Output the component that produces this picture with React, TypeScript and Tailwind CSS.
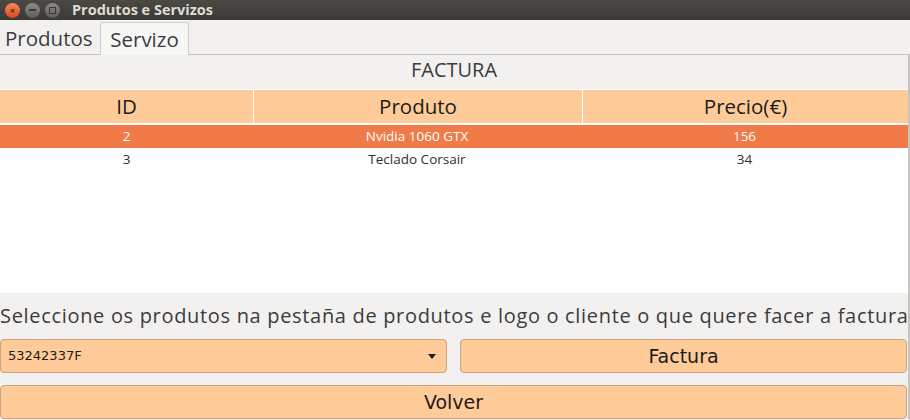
const rows = [
  { id: 2, name: "Nvidia 1060 GTX", price: 156, selected: true },
  { id: 3, name: "Teclado Corsair", price: 34, selected: false },
];

const ui = { fontFamily: '"Open Sans", "Noto Sans", sans-serif' };
const dejavu = { fontFamily: '"DejaVu Sans", sans-serif' };

function TitleBar() {
  return (
    <div className="flex h-[20px] items-center bg-gradient-to-b from-[#4a4944] to-[#3a3935]">
      <div className="flex items-center gap-[5px] pl-[5px]">
        <span className="flex h-[15px] w-[15px] items-center justify-center rounded-full bg-gradient-to-b from-[#f58a5c] to-[#d9471c] text-[9px] font-bold leading-none text-[#5a1d07]">
          ×
        </span>
        <span className="flex h-[15px] w-[15px] items-center justify-center rounded-full bg-gradient-to-b from-[#8c8b86] to-[#5e5d58]">
          <span className="h-[2px] w-[7px] bg-[#3a3935]" />
        </span>
        <span className="flex h-[15px] w-[15px] items-center justify-center rounded-full bg-gradient-to-b from-[#8c8b86] to-[#5e5d58]">
          <span className="h-[7px] w-[7px] border border-[#3a3935]" />
        </span>
      </div>
      <span className="ml-[12px] text-[14.5px] font-bold text-[#dfdbd2]" style={ui}>
        Produtos e Servizos
      </span>
    </div>
  );
}

function Tabs() {
  return (
    <div className="flex h-[35px] items-end border-b border-[#c6c4c1] bg-[#f2f1f0] pl-[1px]">
      <div className="flex h-[32px] w-[99px] items-center px-[4px] text-[20.5px] text-[#3c3c3c]" style={ui}>
        Produtos
      </div>
      <div
        className="-mb-px flex h-[33px] w-[89px] items-center justify-center rounded-t-[3px] border border-b-0 border-[#cfcdca] bg-[#f7f7f6] text-[20.5px] text-[#3c3c3c]"
        style={ui}
      >
        Servizo
      </div>
    </div>
  );
}

function Table() {
  return (
    <div className="flex h-[204px] flex-col bg-white pt-[1px]">
      <div className="grid h-[35px] grid-cols-[253px_328px_1fr] gap-px border-b-2 border-white bg-white text-[20.5px] text-[#1c1c1c]" style={ui}>
        <div className="flex items-center justify-center bg-[#ffcb98]">ID</div>
        <div className="flex items-center justify-center bg-[#ffcb98]">Produto</div>
        <div className="flex items-center justify-center bg-[#ffcb98]">Precio(€)</div>
      </div>
      {rows.map((r) => (
        <div
          key={r.id}
          className={`grid h-[23px] grid-cols-[253px_328px_1fr] text-[13.5px] ${r.selected ? "bg-[#f07a48] text-white" : "bg-white text-[#2e2e2e]"}`}
          style={ui}
        >
          <div className="flex items-center justify-center">{r.id}</div>
          <div className="flex items-center justify-center">{r.name}</div>
          <div className="flex items-center justify-center">{r.price}</div>
        </div>
      ))}
    </div>
  );
}

export default function App() {
  return (
    <div className="h-[420px] w-[910px] overflow-hidden bg-[#f2f1f0]">
      <TitleBar />
      <Tabs />
      <div className="flex flex-col border-r-2 border-[#c6c4c1]">
        <div className="flex h-[34px] items-center justify-center pb-[4px] text-[20px] text-[#3c3c3c]" style={ui}>
          FACTURA
        </div>
        <Table />
        <div className="flex h-[46px] items-center whitespace-nowrap text-[20px] tracking-[0.68px] text-[#3c3c3c]" style={ui}>
          Seleccione os produtos na pestaña de produtos e logo o cliente o que quere facer a factura
        </div>
        <div className="flex gap-[13px] pr-[1px]">
          <div className="flex h-[34px] w-[447px] items-center justify-between rounded-[4px] border border-[#c7a584] bg-[#ffcb98] pl-[7px] pr-[10px] text-[13px] text-[#1c1c1c]" style={dejavu}>
            <span>53242337F</span>
            <span className="h-0 w-0 border-x-[4px] border-t-[5px] border-x-transparent border-t-[#1c1c1c]" />
          </div>
          <button className="flex h-[34px] flex-1 items-center justify-center rounded-[4px] border border-[#c7a584] bg-[#ffcb98] text-[19px] text-[#1c1c1c]" style={dejavu}>
            Factura
          </button>
        </div>
        <div className="pr-[1px] pt-[12px]">
          <button className="flex h-[34px] w-full items-center justify-center rounded-[4px] border border-[#c7a584] bg-[#ffcb98] text-[19px] text-[#1c1c1c]" style={dejavu}>
            Volver
          </button>
        </div>
      </div>
    </div>
  );
}
